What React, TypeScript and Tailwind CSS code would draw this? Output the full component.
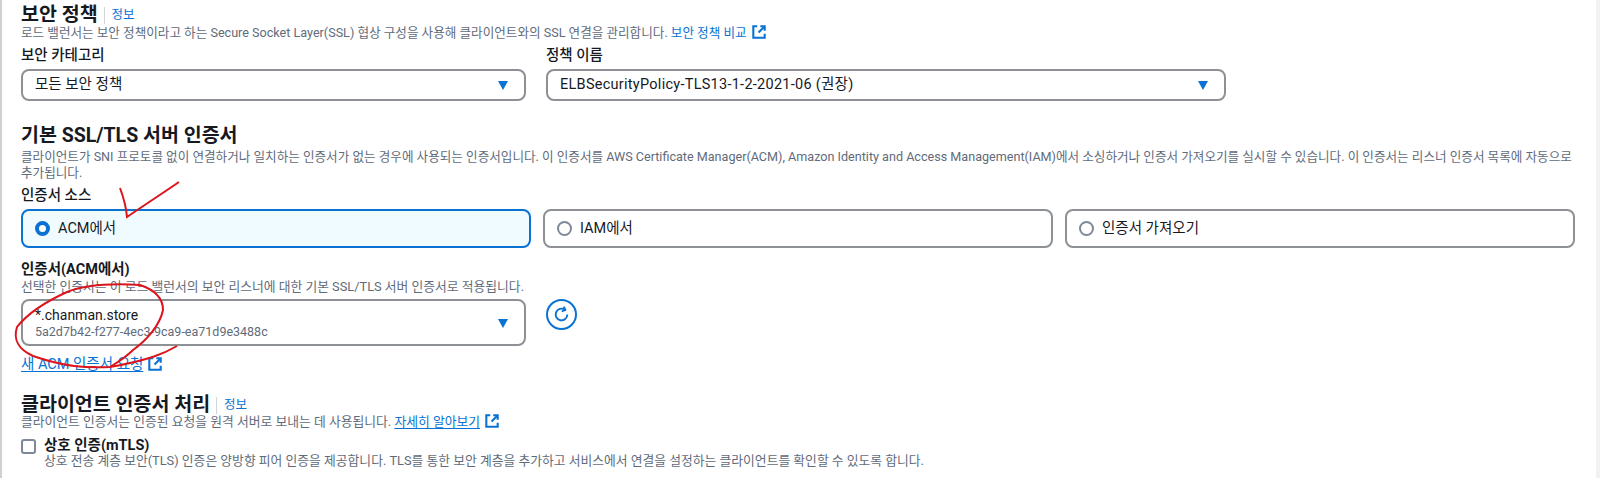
const FONT = "font-['Roboto','Noto_Sans_CJK_KR',sans-serif]";

function ExternalIcon() {
  return (
    <svg viewBox="0 0 16 16" className="w-[14px] h-[14px] inline-block ml-[5px] align-[-2px]" fill="none" stroke="#0972d3" strokeWidth="2.4">
      <path d="M9.5 1.5H14.5V6.5" />
      <path d="M14 2L7.5 8.5" />
      <path d="M6 1.5H1.5V14.5H14.5V10" />
    </svg>
  );
}

function Caret() {
  return (
    <svg viewBox="0 0 12 12" className="w-3 h-3 shrink-0">
      <path d="M1 2H11L6 11Z" fill="#0972d3" />
    </svg>
  );
}

function Heading({ title, info }: { title: string; info?: boolean }) {
  return (
    <div className="flex items-center h-[20px]">
      <h2 className="text-[19.5px] leading-[20px] font-bold text-[#16191f]">{title}</h2>
      {info && (
        <>
          <span className="w-px h-[17px] bg-[#d1d5db] ml-[6px] mr-[7px]" />
          <a className="text-[12.5px] text-[#0972d3]">정보</a>
        </>
      )}
    </div>
  );
}

function Select({ value, sub, className, valueClass = 'text-[14.5px]' }: { value: string; sub?: string; className: string; valueClass?: string }) {
  return (
    <div className={`flex items-center justify-between border-2 border-[#8d9196] rounded-[8px] bg-white pl-[12px] pr-[15px] ${className}`}>
      <div>
        <div className={`leading-[18px] text-[#16191f] ${valueClass}`}>{value}</div>
        {sub && <div className="text-[12.5px] leading-[16px] text-[#5f6b7a]">{sub}</div>}
      </div>
      <Caret />
    </div>
  );
}

function RadioTile({ label, active }: { label: string; active?: boolean }) {
  return (
    <div className={`flex-1 h-[39px] flex items-center pl-[12px] rounded-[8px] border-2 ${active ? 'border-[#0972d3] bg-[#f0fbff]' : 'border-[#8d9196] bg-white'}`}>
      {active ? (
        <span className="w-[15px] h-[15px] rounded-full border-[4px] border-[#0972d3] bg-white" />
      ) : (
        <span className="w-[15px] h-[15px] rounded-full border-2 border-[#7d8998] bg-white" />
      )}
      <span className="ml-[8px] text-[14.5px] text-[#16191f]">{label}</span>
    </div>
  );
}

export default function App() {
  return (
    <div className={`relative w-[1600px] h-[478px] overflow-hidden bg-white border-l-2 border-[#d0d0d0] pl-[19px] pr-[25px] ${FONT}`}>
      <section className="pt-[5px]">
        <Heading title="보안 정책" info />
        <p className="text-[12.6px] leading-[16px] text-[#5f6b7a]">
          로드 밸런서는 보안 정책이라고 하는 Secure Socket Layer(SSL) 협상 구성을 사용해 클라이언트와의 SSL 연결을 관리합니다.{' '}
          <a className="text-[#0972d3]">보안 정책 비교</a>
          <ExternalIcon />
        </p>
        <div className="flex gap-[20px] mt-[6px]">
          <div>
            <label className="block text-[14.5px] leading-[18px] font-medium text-[#16191f]">보안 카테고리</label>
            <Select value="모든 보안 정책" className="w-[505px] h-[32px] mt-[4px]" />
          </div>
          <div>
            <label className="block text-[14.5px] leading-[18px] font-medium text-[#16191f]">정책 이름</label>
            <Select value="ELBSecurityPolicy-TLS13-1-2-2021-06 (권장)" valueClass="text-[14.5px] tracking-[0.27px]" className="w-[680px] h-[32px] mt-[4px]" />
          </div>
        </div>
      </section>

      <section className="mt-[25px]">
        <Heading title="기본 SSL/TLS 서버 인증서" />
        <p className="mt-[3px] text-[12.6px] leading-[16px] text-[#5f6b7a]">
          클라이언트가 SNI 프로토콜 없이 연결하거나 일치하는 인증서가 없는 경우에 사용되는 인증서입니다. 이 인증서를 AWS Certificate Manager(ACM), Amazon Identity and Access Management(IAM)에서 소싱하거나 인증서 가져오기를 실시할 수 있습니다. 이 인증서는 리스너 인증서 목록에 자동으로 추가됩니다.
        </p>
        <label className="block mt-[6px] text-[14.5px] leading-[18px] font-medium text-[#16191f]">인증서 소스</label>
        <div className="flex gap-[12px] mt-[4px]">
          <RadioTile label="ACM에서" active />
          <RadioTile label="IAM에서" />
          <RadioTile label="인증서 가져오기" />
        </div>
        <label className="block mt-[13px] text-[14.5px] leading-[18px] font-bold text-[#16191f]">인증서(ACM에서)</label>
        <p className="text-[12.8px] leading-[16px] text-[#5f6b7a]">선택한 인증서는 이 로드 밸런서의 보안 리스너에 대한 기본 SSL/TLS 서버 인증서로 적용됩니다.</p>
        <div className="flex gap-[20px] mt-[4px] items-start">
          <Select value="*.chanman.store" valueClass="text-[14px]" sub="5a2d7b42-f277-4ec3-9ca9-ea71d9e3488c" className="w-[505px] h-[47px]" />
          <button className="w-[31px] h-[31px] rounded-full border-2 border-[#0972d3] flex items-center justify-center">
            <svg viewBox="0 0 16 16" className="w-[17px] h-[17px]" fill="none" stroke="#0972d3" strokeWidth="1.8">
              <path d="M13.5 8A5.5 5.5 0 1 1 11 3.4" />
              <path d="M10.2 0.6L11.6 3.8L8.2 5" />
            </svg>
          </button>
        </div>
        <div className="mt-[11px] text-[14.5px] leading-[16px]">
          <a className="text-[#0972d3] underline underline-offset-2">새 ACM 인증서 요청</a>
          <ExternalIcon />
        </div>
      </section>

      <section className="mt-[22px]">
        <Heading title="클라이언트 인증서 처리" info />
        <p className="-mt-[1px] text-[12.8px] leading-[16px] text-[#5f6b7a]">
          클라이언트 인증서는 인증된 요청을 원격 서버로 보내는 데 사용됩니다.{' '}
          <a className="text-[#0972d3] underline underline-offset-2">자세히 알아보기</a>
          <ExternalIcon />
        </p>
        <div className="flex mt-[9px]">
          <span className="w-[15px] h-[15px] rounded-[3px] border-2 border-[#7d8998] bg-white shrink-0" />
          <div className="ml-[8px]">
            <div className="text-[14.5px] leading-[14px] font-bold text-[#16191f]">상호 인증(mTLS)</div>
            <p className="text-[12.8px] leading-[16px] text-[#5f6b7a]">
              상호 전송 계층 보안(TLS) 인증은 양방향 피어 인증을 제공합니다. TLS를 통한 보안 계층을 추가하고 서비스에서 연결을 설정하는 클라이언트를 확인할 수 있도록 합니다.
            </p>
          </div>
        </div>
      </section>

      {/* light strip at the right edge of the capture */}
      <div className="absolute right-0 top-0 w-[4px] h-full bg-[#f2f2f2]" />

      {/* red pen marks on top of the screenshot */}
      <svg className="absolute left-[-2px] top-0 w-[1600px] h-[478px] pointer-events-none" viewBox="0 0 1600 478" fill="none" stroke="#dc141c" strokeWidth="2">
        <path d="M120 188C123 196 126 206 127 217C143 206 160 195 179 182" />
        <path d="M177 346C165 353 150 360 110 367C85 368 65 367 33 356C18 349 13 340 17 327C28 313 45 302 67 292C85 285 107 283 140 285C155 290 163 298 163 310C160 325 147 340 133 350C125 358 118 362 110 367" />
      </svg>
    </div>
  );
}
